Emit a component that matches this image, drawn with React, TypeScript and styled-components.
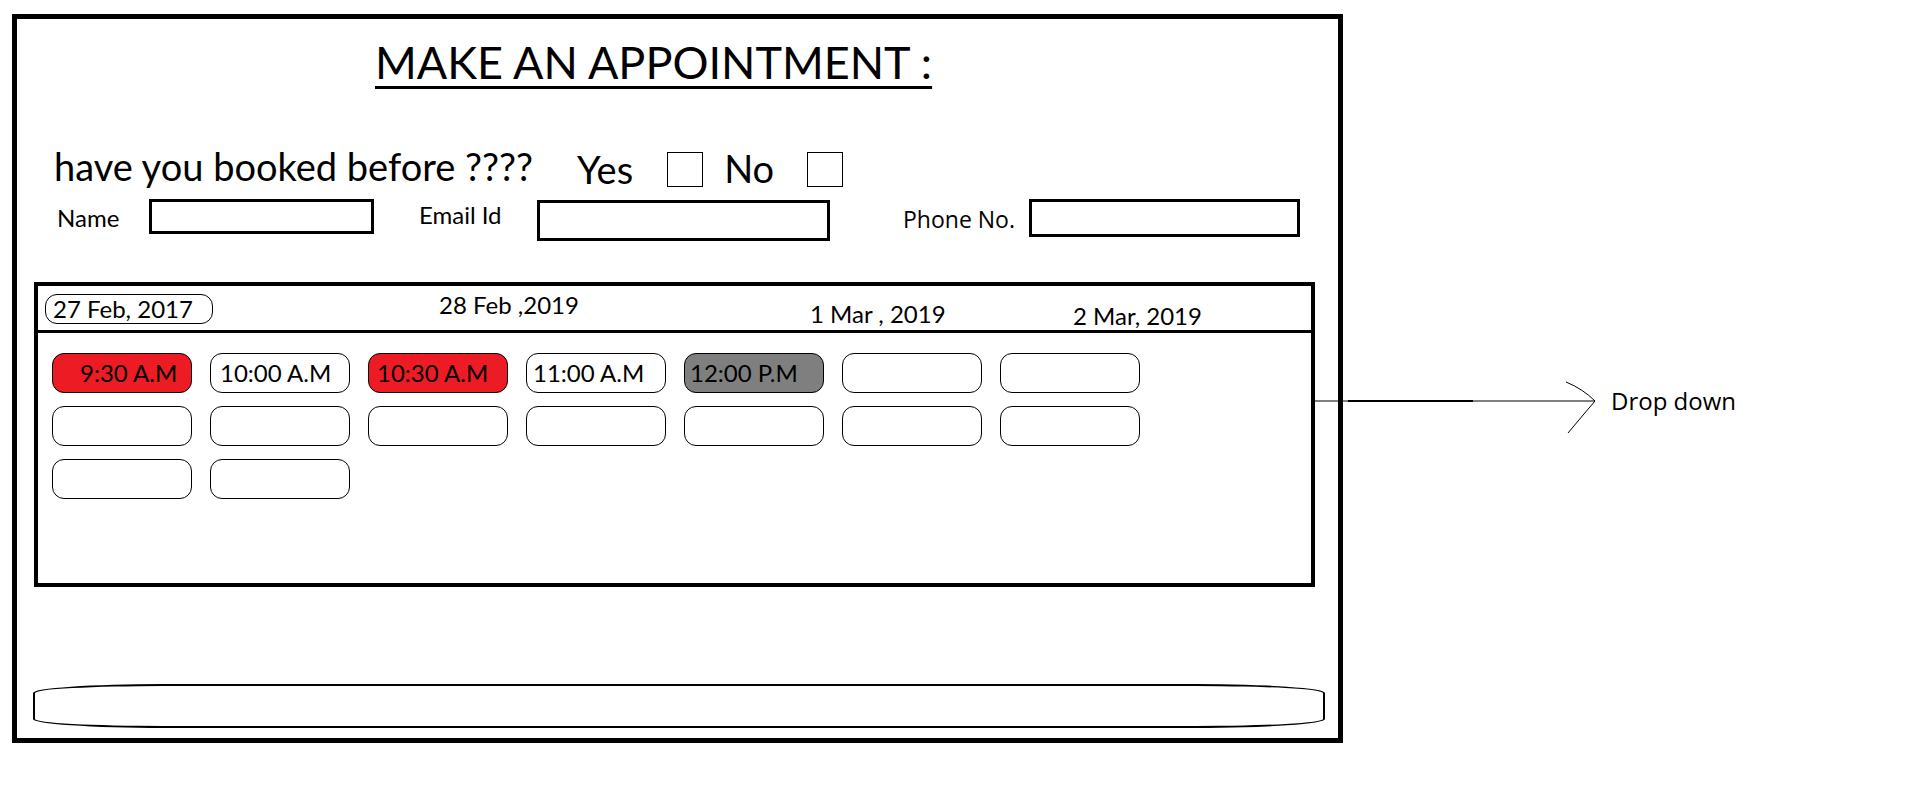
import React from "react";
import styled, { createGlobalStyle, css } from "styled-components";

type Tone = "open" | "booked" | "closed";

interface Slot {
  label: string;
  tone: Tone;
  indent: number;
}

const slots: Slot[] = [
  { label: "9:30 A.M", tone: "booked", indent: 27 },
  { label: "10:00 A.M", tone: "open", indent: 9 },
  { label: "10:30 A.M", tone: "booked", indent: 8 },
  { label: "11:00 A.M", tone: "open", indent: 6 },
  { label: "12:00 P.M", tone: "closed", indent: 5 },
  ...Array.from({ length: 11 }, () => ({ label: "", tone: "open" as Tone, indent: 0 })),
];

const dates = [
  { label: "28 Feb ,2019", dy: 7 },
  { label: "1 Mar , 2019", dy: 16 },
  { label: "2 Mar, 2019", dy: 18 },
];

export default function App() {
  return (
    <>
      <GlobalStyle />
      <Page>
        <Frame>
          <Title>MAKE AN APPOINTMENT :</Title>

          <QuestionRow>
            <Question>have you booked before ????</Question>
            <Option $ml={44} $dy={3}>Yes</Option>
            <Checkbox $ml={34} />
            <Option $ml={21} $dy={2}>No</Option>
            <Checkbox $ml={33} />
          </QuestionRow>

          <FieldRow>
            <Field $ml={0}>
              <Label $dy={5} $w={92}>Name</Label>
              <Input $w={225} $h={35} />
            </Field>
            <Field $ml={45}>
              <Label $dy={2} $w={118}>Email Id</Label>
              <Input $w={293} $h={41} $top={1} />
            </Field>
            <Field $ml={73}>
              <Label $dy={7} $w={126} $alt>Phone No.</Label>
              <Input $w={271} $h={38} />
            </Field>
          </FieldRow>

          <Panel>
            <DateHeader>
              <DatePill>27 Feb, 2017</DatePill>
              {dates.map((d) => (
                <DateLabel key={d.label} $dy={d.dy}>
                  {d.label}
                </DateLabel>
              ))}
            </DateHeader>

            <SlotGrid>
              {slots.map((s, i) => (
                <SlotButton key={i} $tone={s.tone} $indent={s.indent}>
                  {s.label}
                </SlotButton>
              ))}
            </SlotGrid>

            <Note>
              <svg width="290" height="56" viewBox="0 0 290 56">
                <line x1="0" y1="20" x2="284" y2="20" stroke="#000" strokeWidth="1" />
                <line x1="37" y1="20" x2="162" y2="20" stroke="#000" strokeWidth="2" />
                <path d="M255 1 Q272 8 284 20 Q272 34 257 52" fill="none" stroke="#000" strokeWidth="1" />
              </svg>
              <NoteText>Drop down</NoteText>
            </Note>
          </Panel>

          <SubmitBar />
        </Frame>
      </Page>
    </>
  );
}

const GlobalStyle = createGlobalStyle`
  html, body {
    margin: 0;
    padding: 0;
    background: #fff;
  }
  body {
    font-family: Lato, "Liberation Sans", sans-serif;
    color: #000;
  }
  * {
    box-sizing: border-box;
  }
`;

const Page = styled.div`
  width: 1914px;
  min-height: 786px;
  padding: 14px 0 0 12px;
`;

const Frame = styled.div`
  display: flex;
  flex-direction: column;
  width: 1331px;
  height: 729px;
  border: 5px solid #000;
`;

const Title = styled.h1`
  margin: 16px 0 0 0;
  padding-left: 358px;
  font-size: 45px;
  font-weight: 400;
  line-height: 1.2;
  text-decoration: underline;
  text-decoration-thickness: 3px;
  text-underline-offset: 7px;
`;

const QuestionRow = styled.div`
  display: flex;
  align-items: flex-start;
  margin-top: 56px;
  padding-left: 37px;
  font-size: 38px;
  line-height: 1.15;
`;

const Question = styled.span``;

const Option = styled.span<{ $ml: number; $dy: number }>`
  margin-left: ${(p) => p.$ml}px;
  margin-top: ${(p) => p.$dy}px;
`;

const Checkbox = styled.span<{ $ml: number }>`
  width: 36px;
  height: 35px;
  margin: 7px 0 0 ${(p) => p.$ml}px;
  border: 1px solid #000;
`;

const FieldRow = styled.div`
  display: flex;
  align-items: flex-start;
  margin-top: 7px;
  padding-left: 40px;
`;

const Field = styled.div<{ $ml: number }>`
  display: flex;
  align-items: flex-start;
  margin-left: ${(p) => p.$ml}px;
`;

const Label = styled.span<{ $dy: number; $w: number; $alt?: boolean }>`
  width: ${(p) => p.$w}px;
  margin-top: ${(p) => p.$dy}px;
  font-size: 24px;
  line-height: 1.2;
  ${(p) =>
    p.$alt &&
    css`
      font-family: "Open Sans", "Noto Sans", sans-serif;
      font-size: 23px;
    `}
`;

const Input = styled.div<{ $w: number; $h: number; $top?: number }>`
  width: ${(p) => p.$w}px;
  height: ${(p) => p.$h}px;
  margin-top: ${(p) => p.$top ?? 0}px;
  border: 3px solid #000;
`;

const Panel = styled.div`
  position: relative;
  width: 1281px;
  height: 305px;
  margin: 41px 0 0 17px;
  border: 4px solid #000;
`;

const DateHeader = styled.div`
  display: grid;
  grid-template-columns: 394px 371px 263px 1fr;
  align-items: start;
  height: 47px;
  padding-left: 7px;
  border-bottom: 3px solid #000;
  font-size: 24px;
`;

const DatePill = styled.div`
  width: 168px;
  height: 30px;
  margin-top: 8px;
  padding-left: 7px;
  border: 1px solid #000;
  border-radius: 12px;
  line-height: 28px;
`;

const DateLabel = styled.div<{ $dy: number }>`
  margin-top: ${(p) => p.$dy}px;
  line-height: 24px;
`;

const toneColor: Record<Tone, string> = {
  open: "#fff",
  booked: "#ed1c24",
  closed: "#7f7f7f",
};

const SlotGrid = styled.div`
  display: grid;
  grid-template-columns: repeat(7, 140px);
  grid-auto-rows: 40px;
  column-gap: 18px;
  row-gap: 13px;
  padding: 20px 0 0 14px;
`;

const SlotButton = styled.div<{ $tone: Tone; $indent: number }>`
  display: flex;
  align-items: center;
  padding-left: ${(p) => p.$indent}px;
  border: 1px solid #000;
  border-radius: 12px;
  background: ${(p) => toneColor[p.$tone]};
  font-size: 24px;
  line-height: 1;
  white-space: nowrap;
`;

const Note = styled.div`
  position: absolute;
  left: 100%;
  top: 95px;
  display: flex;
  align-items: flex-start;
  gap: 10px;
`;

const NoteText = styled.span`
  margin-top: 5px;
  font-family: "Open Sans", "Noto Sans", sans-serif;
  font-size: 24px;
  line-height: 30px;
  white-space: nowrap;
`;

const SubmitBar = styled.div`
  height: 44px;
  margin: 97px 13px 0 16px;
  border: 2.5px solid #000;
  border-radius: 130px / 9px;
`;
